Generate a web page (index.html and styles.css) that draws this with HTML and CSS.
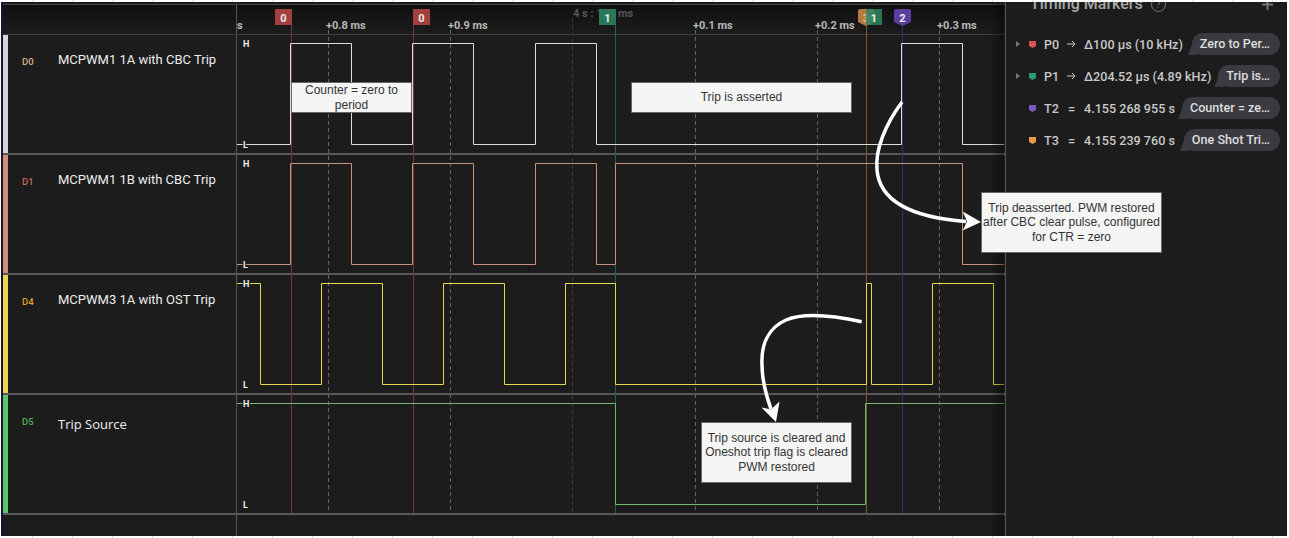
FILE: index.html
```html
<!DOCTYPE html>
<html lang="en">
<head>
<meta charset="utf-8">
<title>Timing diagram</title>
<link rel="stylesheet" href="styles.css">
</head>
<body>
<div class="app">
  <main class="waves">
    <div class="head"><div class="name-col"></div><div class="plot-col"></div></div>
    <section class="row">
      <div class="name-col"><i class="bar bar-d0"></i><span class="tag tag-d0">D0</span><span class="name">MCPWM1 1A with CBC Trip</span></div>
      <div class="plot-col"></div>
    </section>
    <section class="row">
      <div class="name-col"><i class="bar bar-d1"></i><span class="tag tag-d1">D1</span><span class="name">MCPWM1 1B with CBC Trip</span></div>
      <div class="plot-col"></div>
    </section>
    <section class="row">
      <div class="name-col"><i class="bar bar-d4"></i><span class="tag tag-d4">D4</span><span class="name">MCPWM3 1A with OST Trip</span></div>
      <div class="plot-col"></div>
    </section>
    <section class="row">
      <div class="name-col"><i class="bar bar-d5"></i><span class="tag tag-d5">D5</span><span class="name name-alt">Trip Source</span></div>
      <div class="plot-col"></div>
    </section>
    <div class="foot"><div class="name-col"></div><div class="plot-col"></div></div>

    <svg class="canvas" width="768" height="534" viewBox="237 2 768 534" xmlns="http://www.w3.org/2000/svg">
      <defs>
        <linearGradient id="fade" x1="0" x2="1" y1="0" y2="0">
          <stop offset="0" stop-color="#000" stop-opacity="0"/>
          <stop offset="1" stop-color="#000" stop-opacity=".45"/>
        </linearGradient>
      </defs>
      <g class="grid">
        <path d="M328.5 30V513M450.5 30V513M695.5 30V513M817.5 30V513M939.5 30V513"/>
        <path class="grid-dim" d="M572.5 18V513"/>
      </g>
      <g class="marks" fill="none">
        <path stroke="#6d3b3b" d="M291.5 25V513M413.5 25V513"/>
        <path stroke="#2c5f49" d="M615.5 25V513"/>
        <path stroke="#7a5a30" d="M866.5 25V513"/>
        <path stroke="#3a3264" d="M902.5 25V513"/>
      </g>
      <g class="traces" fill="none">
        <path stroke="#dcdcdc" d="M237 144.5H290.5V43.5H351.5V144.5H412.5V43.5H473.5V144.5H535.5V43.5H596.5V144.5H901.5V43.5H962.5V144.5H1004"/>
        <path stroke="#c9917b" d="M237 264.5H290.5V163.5H351.5V264.5H412.5V163.5H473.5V264.5H535.5V163.5H596.5V264.5H615.5V163.5H962.5V264.5H1004"/>
        <path stroke="#e6d84a" d="M237 283.5H260.5V384.5H321.5V283.5H382.5V384.5H443.5V283.5H504.5V384.5H565.5V283.5H615.5V384.5H866.5V283.5H871.5V384.5H932.5V283.5H993.5V384.5H1004"/>
        <path stroke="#6fb96f" d="M237 403.5H615.5V504.5H865.5V403.5H1004"/>
      </g>
      <g class="hl">
        <text x="243" y="46.5">H</text><text x="243" y="148">L</text>
        <text x="243" y="166.5">H</text><text x="243" y="268">L</text>
        <text x="243" y="286.5">H</text><text x="243" y="388">L</text>
        <text x="243" y="406.5">H</text><text x="243" y="508">L</text>
      </g>
      <g class="ticks">
        <text x="237" y="28.5">s</text>
        <text x="326" y="28.5">+0.8 ms</text>
        <text x="448" y="28.5">+0.9 ms</text>
        <text class="tick-dim" x="573" y="17">4 s : 155 ms</text>
        <text x="693" y="28.5">+0.1 ms</text>
        <text x="815" y="28.5">+0.2 ms</text>
        <text x="937" y="28.5">+0.3 ms</text>
      </g>
      <g class="flags">
        <rect x="275" y="9" width="17" height="16" fill="#a23f3f"/><text x="283.5" y="21.5">0</text>
        <rect x="413" y="9" width="17" height="16" fill="#a23f3f"/><text x="421.5" y="21.5">0</text>
        <rect x="599" y="9" width="17" height="16" fill="#28795a"/><text x="607.5" y="21.5">1</text>
        <path d="M858 11Q858 9 860 9H874V22L866 26L858 22Z" fill="#b57a3c"/><text x="866" y="21.5" fill-opacity=".6">3</text>
        <rect x="866" y="9" width="16" height="16" fill="#2f8560" fill-opacity=".85"/><text x="874" y="21.5">1</text>
        <path d="M894 11Q894 9 896 9H909Q911 9 911 11V22L902.5 26L894 22Z" fill="#5c3e9c"/><text x="902.5" y="21.5">2</text>
      </g>
      <rect x="990" y="4" width="14" height="532" fill="url(#fade)"/>
      <g class="arrows">
        <path d="M902 102C885 125 875 150 877 170C880 205 920 218 966 221.5"/>
        <path class="head-fill" d="M981 222L962.7 230.5L967 221.5L962.7 211.5Z"/>
        <path d="M861.7 321.7C835 316 805 312 786 320C768 328 761 345 762 365C762 380 766 395 771 409"/>
        <path class="head-fill" d="M776 422L761.5 407.5L771 409.5L779.5 401.5Z"/>
      </g>
    </svg>

    <div class="note note-a">Counter = zero to period</div>
    <div class="note note-b">Trip is asserted</div>
    <div class="note note-c">Trip deasserted. PWM restored after CBC clear pulse, configured for CTR = zero</div>
    <div class="note note-d">Trip source is cleared and Oneshot trip flag is cleared PWM restored</div>
  </main>

  <aside class="side">
    <header class="side-head">
      <h2 class="side-title">Timing Markers</h2>
      <span class="help">?</span>
      <svg class="plus" width="11" height="11" viewBox="0 0 11 11"><path d="M5.5 0V11M0 5.5H11" stroke="#777" stroke-width="2"/></svg>
    </header>
    <ul class="markers">
      <li class="marker">
        <i class="caret"></i><svg class="pin" width="7" height="7" viewBox="0 0 7 7"><path d="M0 0H7V5L3.5 7L0 5Z" fill="#d9534f"/></svg>
        <span class="mk-id">P0</span><svg class="mk-arrow" width="9" height="8" viewBox="0 0 9 8"><path d="M0 4H8M5 1L8 4L5 7" fill="none" stroke="#ccc"/></svg><span class="mk-val">Δ100 µs (10 kHz)</span><span class="pill">Zero to Per…</span>
      </li>
      <li class="marker">
        <i class="caret"></i><svg class="pin" width="7" height="7" viewBox="0 0 7 7"><path d="M0 0H7V5L3.5 7L0 5Z" fill="#2e9b6e"/></svg>
        <span class="mk-id">P1</span><svg class="mk-arrow" width="9" height="8" viewBox="0 0 9 8"><path d="M0 4H8M5 1L8 4L5 7" fill="none" stroke="#ccc"/></svg><span class="mk-val">Δ204.52 µs (4.89 kHz)</span><span class="pill">Trip is…</span>
      </li>
      <li class="marker">
        <i class="caret caret-none"></i><svg class="pin" width="7" height="7" viewBox="0 0 7 7"><path d="M0 0H7V5L3.5 7L0 5Z" fill="#7e57c2"/></svg>
        <span class="mk-id">T2</span><span class="mk-op">=</span><span class="mk-val">4.155 268 955 s</span><span class="pill">Counter = ze…</span>
      </li>
      <li class="marker">
        <i class="caret caret-none"></i><svg class="pin" width="7" height="7" viewBox="0 0 7 7"><path d="M0 0H7V5L3.5 7L0 5Z" fill="#e8994a"/></svg>
        <span class="mk-id">T3</span><span class="mk-op">=</span><span class="mk-val">4.155 239 760 s</span><span class="pill">One Shot Tri…</span>
      </li>
    </ul>
  </aside>
</div>
</body>
</html>
```

FILE: styles.css
```css
* { box-sizing: border-box; }
html, body { margin: 0; height: 100%; }
body {
  width: 1289px;
  height: 538px;
  overflow: hidden;
  background: #fff repeating-linear-gradient(90deg, #fff 0 32px, #ddd 32px 33px, #fff 33px 40px);
  font-family: Roboto, "Liberation Sans", sans-serif;
}
.app {
  display: flex;
  width: 1286px;
  height: 534px;
  margin: 2px 0 2px 1px;
  background: #1c1c1c;
  border-left: 2px solid #1a1230;
  color: #ccc;
}

/* waveform area */
.waves {
  position: relative;
  z-index: 2;
  width: 1002px;
  flex: none;
  display: flex;
  flex-direction: column;
}
.head, .row, .foot { display: flex; flex: none; }
.head {
  height: 31px;
  margin-top: 2px;
  border-top: 1px solid #45454c;
  border-bottom: 1px solid #3c3c44;
  background: linear-gradient(#101010, #1c1c1c);
}
.row {
  height: 120px;
  border-bottom: 2px solid #58585e;
}
.foot { flex: 1; }
.name-col {
  position: relative;
  width: 233px;
  flex: none;
  display: flex;
  align-items: flex-start;
}
.plot-col {
  flex: 1;
  border-left: 1px solid #55555b;
}
.bar {
  width: 5px;
  height: 100%;
  flex: none;
}
.bar-d0 { background: #d6d6d6; }
.bar-d1 { background: #c9917b; }
.bar-d4 { background: #e6d84a; }
.bar-d5 { background: #5cc46a; }
.tag {
  width: 36px;
  margin: 21px 0 0 14px;
  flex: none;
  font-size: 9.5px;
  line-height: 12px;
  font-weight: 500;
}
.tag-d0 { color: #d8ae7c; }
.tag-d1 { color: #c46a55; }
.tag-d4 { color: #e2a02a; }
.tag-d5 { color: #4caf50; }
.name {
  margin-top: 17px;
  font-size: 13px;
  line-height: 16px;
  color: #eee;
  white-space: nowrap;
}
.name-alt {
  margin-top: 21px;
  font-family: "Open Sans", sans-serif;
  font-size: 13px;
}

/* canvas overlay */
.canvas {
  position: absolute;
  left: 234px;
  top: 0;
  display: block;
}
.grid path { fill: none; stroke: #636363; stroke-dasharray: 4 3; }
.grid .grid-dim { stroke: #3a3a3a; }
.traces path { stroke-width: 1; }
.hl text {
  font: 700 9px Roboto, sans-serif;
  fill: #eee;
  paint-order: stroke;
  stroke: #1c1c1c;
  stroke-width: 2px;
}
.ticks text {
  font: 700 11px Roboto, sans-serif;
  fill: #b8b8b8;
}
.ticks .tick-dim { fill: #565656; }
.flags text {
  font: 700 11px Roboto, sans-serif;
  fill: #eee;
  text-anchor: middle;
}
.arrows path { fill: none; stroke: #fff; stroke-width: 3.5; }
.arrows .head-fill { fill: #fff; stroke: none; }

/* call-outs */
.note {
  position: absolute;
  display: flex;
  align-items: center;
  justify-content: center;
  text-align: center;
  background: #f5f5f5;
  border: 1px solid #666;
  color: #333;
  font: 12px/14.6px "Liberation Sans", Arial, sans-serif;
}
.note-a { left: 288px; top: 80px; width: 121px; height: 31px; padding: 0 10px; }
.note-b { left: 628px; top: 80px; width: 221px; height: 31px; }
.note-c { left: 978px; top: 190px; width: 181px; height: 61px; padding: 0 1px; }
.note-d { left: 698px; top: 420px; width: 151px; height: 61px; padding: 0 2px; }

/* side panel */
.side {
  flex: 1;
  border-left: 1px solid #55555b;
  padding-right: 7px;
  overflow: hidden;
}
.side-head {
  display: flex;
  align-items: center;
  height: 20px;
  margin-top: -8px;
  padding-left: 24px;
}
.side-title {
  margin: 0;
  font-size: 16px;
  font-weight: 500;
  line-height: 20px;
  color: #a8a8a8;
}
.help {
  width: 15px;
  height: 15px;
  margin-left: 8px;
  border: 1px solid #777;
  border-radius: 50%;
  font-size: 10px;
  line-height: 13px;
  text-align: center;
  color: #777;
}
.plus { margin-left: auto; margin-right: 7px; }
.markers {
  list-style: none;
  margin: 19px 0 0;
  padding: 0;
  display: flex;
  flex-direction: column;
  gap: 10px;
}
.marker {
  display: flex;
  align-items: center;
  height: 22px;
  font-size: 12.6px;
  font-weight: 500;
  color: #c8c8c8;
  white-space: nowrap;
}
.caret {
  width: 0;
  height: 0;
  margin-left: 10px;
  border-left: 4px solid #777;
  border-top: 3.5px solid transparent;
  border-bottom: 3.5px solid transparent;
}
.caret-none { border-left-color: transparent; }
.pin { margin-left: 9px; flex: none; }
.mk-id { width: 23px; margin-left: 8px; flex: none; }
.mk-op { width: 16px; margin-left: 1px; flex: none; }
.mk-arrow { margin-right: 8px; flex: none; }
.pill {
  position: relative;
  margin-left: auto;
  height: 22px;
  padding: 0 10px 0 8px;
  border-radius: 11px;
  background: #3a3a40;
  color: #dedede;
  font-size: 12.6px;
  line-height: 21px;
}
.pill::before {
  content: "";
  position: absolute;
  left: -4px;
  bottom: 0;
  width: 10px;
  height: 10px;
  background: #3a3a40;
  clip-path: polygon(40% 0, 100% 0, 100% 100%, 0 100%);
}
```
